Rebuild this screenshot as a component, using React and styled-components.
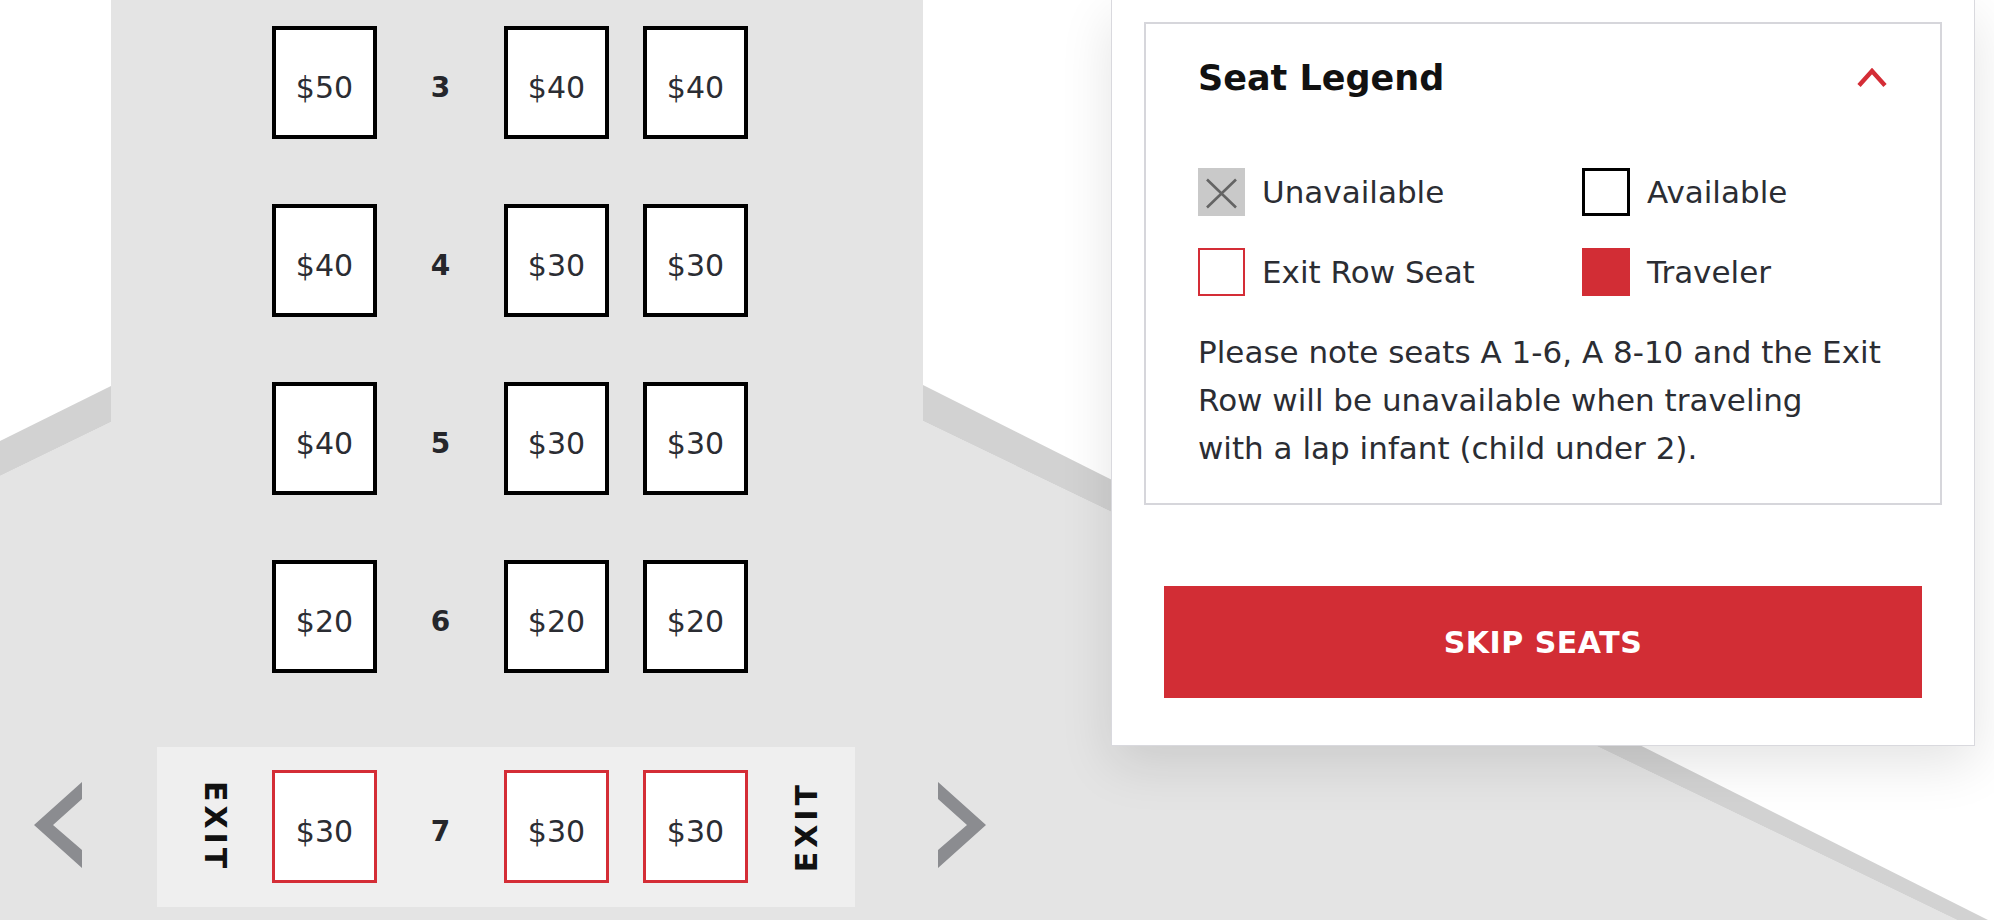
import React from 'react'
import styled, { createGlobalStyle, css } from 'styled-components'

const GlobalStyle = createGlobalStyle`
  html, body {
    margin: 0;
    padding: 0;
    background: #fff;
  }
  body {
    font-family: "DejaVu Sans", "Liberation Sans", sans-serif;
    overflow: hidden;
  }
  * {
    box-sizing: border-box;
  }
`

const rows = [
    { n: 3, prices: [50, 40, 40] },
    { n: 4, prices: [40, 30, 30] },
    { n: 5, prices: [40, 30, 30] },
    { n: 6, prices: [20, 20, 20] },
    { n: 7, prices: [30, 30, 30], exit: true },
]

const legend = [
    { kind: 'unavailable', label: 'Unavailable' },
    { kind: 'available', label: 'Available' },
    { kind: 'exit', label: 'Exit Row Seat' },
    { kind: 'traveler', label: 'Traveler' },
]

function Wing() {
    return (
        <Wings width="1994" height="920" viewBox="0 0 1994 920">
            <polygon points="0,476 111,422 111,920 0,920" fill="#e4e4e4" />
            <polygon points="0,441 111,386 111,422 0,476" fill="#d2d2d2" />
            <polygon points="923,421 1957,920 923,920" fill="#e4e4e4" />
            <polygon points="923,385 1988,920 1957,920 923,421" fill="#d2d2d2" />
        </Wings>
    )
}

function ArrowIcon({ dir }) {
    const pts = dir === 'left'
        ? '48,0 0,43 48,86 48,68 19,43 48,17'
        : '0,0 48,43 0,86 0,68 29,43 0,17'
    return (
        <svg width="48" height="86" viewBox="0 0 48 86">
            <polygon points={pts} fill="#8b8c90" />
        </svg>
    )
}

function LegendSwatch({ kind }) {
    return (
        <Swatch $kind={kind}>
            {kind === 'unavailable' && (
                <svg width="47" height="48" viewBox="0 0 47 48">
                    <path d="M9 11.5 L38 39.5 M38 11.5 L9 39.5" stroke="#646464" strokeWidth="2.6" fill="none" />
                </svg>
            )}
        </Swatch>
    )
}

export default function App() {
    return (
        <>
            <GlobalStyle />
            <Scene>
                <Wing />
                <NavArrow $side="left" aria-label="previous"><ArrowIcon dir="left" /></NavArrow>
                <NavArrow $side="right" aria-label="next"><ArrowIcon dir="right" /></NavArrow>

                <Cabin>
                    {rows.map(row => (
                        <SeatRow key={row.n} $exit={row.exit}>
                            <ExitSlot $side="left">
                                {row.exit && <ExitLabel>EXIT</ExitLabel>}
                            </ExitSlot>
                            <Seat $exit={row.exit}>${row.prices[0]}</Seat>
                            <RowNumber>{row.n}</RowNumber>
                            <SeatPair>
                                <Seat $exit={row.exit}>${row.prices[1]}</Seat>
                                <Seat $exit={row.exit}>${row.prices[2]}</Seat>
                            </SeatPair>
                            <ExitSlot $side="right">
                                {row.exit && <ExitLabel $flip>EXIT</ExitLabel>}
                            </ExitSlot>
                        </SeatRow>
                    ))}
                </Cabin>

                <Panel>
                    <LegendBox>
                        <LegendHeader>
                            <LegendTitle>Seat Legend</LegendTitle>
                            <svg width="32" height="20" viewBox="0 0 32 20">
                                <polyline points="3,17.5 16,3 29,17.5" fill="none" stroke="#d42d36" strokeWidth="4.4" />
                            </svg>
                        </LegendHeader>
                        <LegendGrid>
                            {legend.map(item => (
                                <LegendItem key={item.kind}>
                                    <LegendSwatch kind={item.kind} />
                                    <LegendLabel>{item.label}</LegendLabel>
                                </LegendItem>
                            ))}
                        </LegendGrid>
                        <Note>
                            Please note seats A 1-6, A 8-10 and the Exit<br />
                            Row will be unavailable when traveling<br />
                            with a lap infant (child under 2).
                        </Note>
                    </LegendBox>
                    <SkipButton>SKIP SEATS</SkipButton>
                </Panel>
            </Scene>
        </>
    )
}

const Scene = styled.div`
position: relative;
width: 1994px;
height: 920px;
overflow: hidden;
display: flex;
align-items: flex-start;
padding-left: 111px;
background: #fff;
`

const Wings = styled.svg`
position: absolute;
left: 0;
top: 0;
z-index: 0;
`

const NavArrow = styled.button`
position: absolute;
z-index: 2;
top: 782px;
left: ${p => (p.$side === 'left' ? '34px' : '938px')};
width: 48px;
height: 86px;
padding: 0;
border: 0;
background: none;
display: block;
cursor: pointer;
svg { display: block; }
`

const Cabin = styled.div`
position: relative;
z-index: 1;
flex-shrink: 0;
width: 812px;
height: 920px;
background: #e4e4e4;
padding: 26px 0 0 46px;
display: flex;
flex-direction: column;
gap: 65px;
`

const SeatRow = styled.div`
display: flex;
align-items: center;
width: 698px;
${p => p.$exit && css`
    margin-top: 9px;
    padding: 23px 0 24px;
    background: #efefef;
`}
`

const ExitSlot = styled.div`
flex-shrink: 0;
display: flex;
align-items: center;
justify-content: center;
width: ${p => (p.$side === 'left' ? '115px' : '107px')};
padding-left: ${p => (p.$side === 'left' ? '0' : '10px')};
`

const ExitLabel = styled.span`
writing-mode: vertical-rl;
transform: ${p => (p.$flip ? 'rotate(180deg)' : 'none')};
font-size: 30px;
font-weight: 700;
letter-spacing: 4px;
line-height: 1;
color: #111;
`

const Seat = styled.div`
flex-shrink: 0;
width: 105px;
height: 113px;
padding-top: 9px;
background: #fff;
border: ${p => (p.$exit ? '3px solid #d42d36' : '4px solid #000')};
display: flex;
align-items: center;
justify-content: center;
font-size: 30px;
color: #2b2d33;
`

const RowNumber = styled.div`
flex-shrink: 0;
width: 127px;
padding-top: 10px;
text-align: center;
font-size: 28px;
font-weight: 700;
color: #25262b;
`

const SeatPair = styled.div`
display: flex;
gap: 34px;
`

const Panel = styled.div`
position: relative;
z-index: 1;
flex-shrink: 0;
margin-left: 188px;
width: 864px;
background: #fff;
border: 1px solid #d9d9de;
border-top: 0;
padding: 22px 32px 47px;
box-shadow: 0 18px 50px rgba(0, 0, 0, 0.11);
`

const LegendBox = styled.div`
border: 2px solid #d6d6db;
padding: 33px 52px 31px;
`

const LegendHeader = styled.div`
display: flex;
align-items: center;
justify-content: space-between;
height: 42px;
svg { display: block; }
`

const LegendTitle = styled.h2`
margin: 0;
font-size: 35px;
font-weight: 700;
line-height: 42px;
color: #111;
`

const LegendGrid = styled.div`
display: grid;
grid-template-columns: 384px 1fr;
row-gap: 32px;
margin-top: 69px;
`

const LegendItem = styled.div`
display: flex;
align-items: center;
gap: 17px;
`

const Swatch = styled.div`
flex-shrink: 0;
width: 48px;
height: 48px;
${p => p.$kind === 'unavailable' && css`
    width: 47px;
    background: #c9c9c9;
`}
${p => p.$kind === 'available' && css`
    border: 3px solid #000;
    background: #fff;
`}
${p => p.$kind === 'exit' && css`
    width: 47px;
    border: 2px solid #d42d36;
    background: #fff;
`}
${p => p.$kind === 'traveler' && css`
    background: #d22d35;
`}
svg { display: block; }
`

const LegendLabel = styled.span`
font-size: 31px;
line-height: 48px;
color: #2b2d33;
`

const Note = styled.p`
margin: 32px 0 0;
font-size: 31px;
line-height: 48px;
color: #2b2d33;
white-space: nowrap;
`

const SkipButton = styled.button`
display: block;
width: calc(100% - 40px);
height: 112px;
margin: 81px 20px 0;
border: 0;
background: #d22d35;
color: #fff;
font-family: inherit;
font-size: 30px;
font-weight: 700;
letter-spacing: 0.5px;
cursor: pointer;
`
